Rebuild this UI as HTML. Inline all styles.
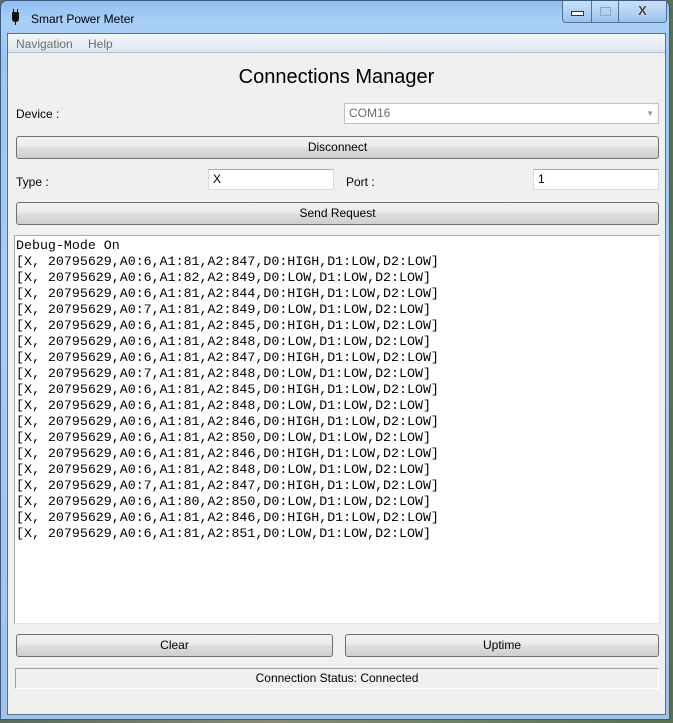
<!DOCTYPE html>
<html><head><meta charset="utf-8"><style>
*{box-sizing:border-box;margin:0;padding:0}
body{width:673px;height:723px;overflow:hidden;position:relative;font-family:"Liberation Sans",sans-serif;font-size:12px;color:#000;
background:linear-gradient(90deg,#5a6a5a,#8a8a70 40%,#6f7f60 70%,#5a6e50);}
.win{position:absolute;left:0;top:0;width:670px;height:720px;border:1px solid #3a5a80;border-radius:7px 7px 0 0;
background:linear-gradient(180deg,#8fbdf0 0,#a9d0f8 20px,#9cc6f2 60px,#a8cdf2 300px,#9ec3e8 100%);}
.title{position:absolute;left:30px;top:11px;font-size:12px;color:#000}
.icon{position:absolute;left:11px;top:11px;width:7px;height:10px;background:#111;border-radius:1px 1px 3px 3px}
.icon:before{content:"";position:absolute;left:1px;top:-3px;width:1px;height:3px;background:#111;box-shadow:4px 0 #111}
.icon:after{content:"";position:absolute;left:3px;top:10px;width:1px;height:3px;background:#111}
.cap{position:absolute;top:0;height:22px;border:1px solid #50709a;border-top:none;background:linear-gradient(#c8e0fa,#9cc4ee)}
.client{position:absolute;left:6px;top:32px;width:659px;height:682px;background:#f0f0f0;border:1px solid #5a7090}
.menu{position:absolute;left:0;top:0;width:100%;height:19px;background:linear-gradient(#f4f6fb,#dfe5f0);border-bottom:1px solid #b4bccc;color:#6d6d6d;font-size:12px}
.menu span{position:absolute;top:3px}
.abs{position:absolute}
.btn{position:absolute;height:23px;border:1px solid #707070;border-radius:3px;background:linear-gradient(#f2f2f2 0,#ebebeb 45%,#dddddd 50%,#cfcfcf 100%);text-align:center;line-height:21px;font-size:12px}
.inp{position:absolute;height:21px;background:#fff;border:1px solid #d5dbe3;border-top-color:#abadb3;padding-left:4px;line-height:19px;font-size:12px}
.ta{position:absolute;left:6px;top:201px;width:646px;height:389px;background:#fff;border:1px solid #a8a8a8;border-right-color:#e3e3e3;border-bottom-color:#e3e3e3;
font-family:"Liberation Mono",monospace;font-size:13.3px;line-height:16px;padding:2px 0 0 1px;white-space:pre}
</style></head><body>
<div class="win">
<div class="icon"></div>
<div class="title">Smart Power Meter</div>
<div class="cap" style="left:561px;width:30px;border-radius:0 0 0 4px"><div style="position:absolute;left:8px;top:10px;width:13px;height:5px;border:1px solid #333;background:#fff"></div></div>
<div class="cap" style="left:590px;width:28px"><div style="position:absolute;left:8px;top:6px;width:11px;height:9px;border:1px solid #8aa6c8"></div></div>
<div class="cap" style="left:617px;width:49px;border-radius:0 0 4px 0;color:#444;font-weight:bold;font-size:13px;text-align:center;line-height:20px;text-shadow:0 0 2px #fff">X</div>
<div class="client">
<div class="menu"><span style="left:8px">Navigation</span><span style="left:80px">Help</span></div>
<div class="abs" style="left:0;width:657px;top:32px;text-align:center;font-size:20px">Connections Manager</div>
<div class="abs" style="left:8px;top:73px">Device :</div>
<div class="inp" style="left:336px;top:69px;width:315px;color:#6d6d6d;border-color:#c0c0c0">COM16<span style="position:absolute;right:4px;top:0;font-size:8px;color:#999">▼</span></div>
<div class="btn" style="left:8px;top:102px;width:643px">Disconnect</div>
<div class="abs" style="left:8px;top:141px">Type :</div>
<div class="inp" style="left:200px;top:135px;width:126px">X</div>
<div class="abs" style="left:338px;top:141px">Port :</div>
<div class="inp" style="left:525px;top:135px;width:126px">1</div>
<div class="btn" style="left:8px;top:168px;width:643px">Send Request</div>
<div class="ta">Debug-Mode On
[X, 20795629,A0:6,A1:81,A2:847,D0:HIGH,D1:LOW,D2:LOW]
[X, 20795629,A0:6,A1:82,A2:849,D0:LOW,D1:LOW,D2:LOW]
[X, 20795629,A0:6,A1:81,A2:844,D0:HIGH,D1:LOW,D2:LOW]
[X, 20795629,A0:7,A1:81,A2:849,D0:LOW,D1:LOW,D2:LOW]
[X, 20795629,A0:6,A1:81,A2:845,D0:HIGH,D1:LOW,D2:LOW]
[X, 20795629,A0:6,A1:81,A2:848,D0:LOW,D1:LOW,D2:LOW]
[X, 20795629,A0:6,A1:81,A2:847,D0:HIGH,D1:LOW,D2:LOW]
[X, 20795629,A0:7,A1:81,A2:848,D0:LOW,D1:LOW,D2:LOW]
[X, 20795629,A0:6,A1:81,A2:845,D0:HIGH,D1:LOW,D2:LOW]
[X, 20795629,A0:6,A1:81,A2:848,D0:LOW,D1:LOW,D2:LOW]
[X, 20795629,A0:6,A1:81,A2:846,D0:HIGH,D1:LOW,D2:LOW]
[X, 20795629,A0:6,A1:81,A2:850,D0:LOW,D1:LOW,D2:LOW]
[X, 20795629,A0:6,A1:81,A2:846,D0:HIGH,D1:LOW,D2:LOW]
[X, 20795629,A0:6,A1:81,A2:848,D0:LOW,D1:LOW,D2:LOW]
[X, 20795629,A0:7,A1:81,A2:847,D0:HIGH,D1:LOW,D2:LOW]
[X, 20795629,A0:6,A1:80,A2:850,D0:LOW,D1:LOW,D2:LOW]
[X, 20795629,A0:6,A1:81,A2:846,D0:HIGH,D1:LOW,D2:LOW]
[X, 20795629,A0:6,A1:81,A2:851,D0:LOW,D1:LOW,D2:LOW]</div>
<div class="btn" style="left:8px;top:600px;width:317px">Clear</div>
<div class="btn" style="left:337px;top:600px;width:314px">Uptime</div>
<div class="abs" style="left:7px;top:634px;width:644px;height:21px;border:1px solid #a0a0a0;border-right-color:#fff;border-bottom-color:#fff;text-align:center;line-height:19px">Connection Status: Connected</div>
</div>
</div>
</body></html>
